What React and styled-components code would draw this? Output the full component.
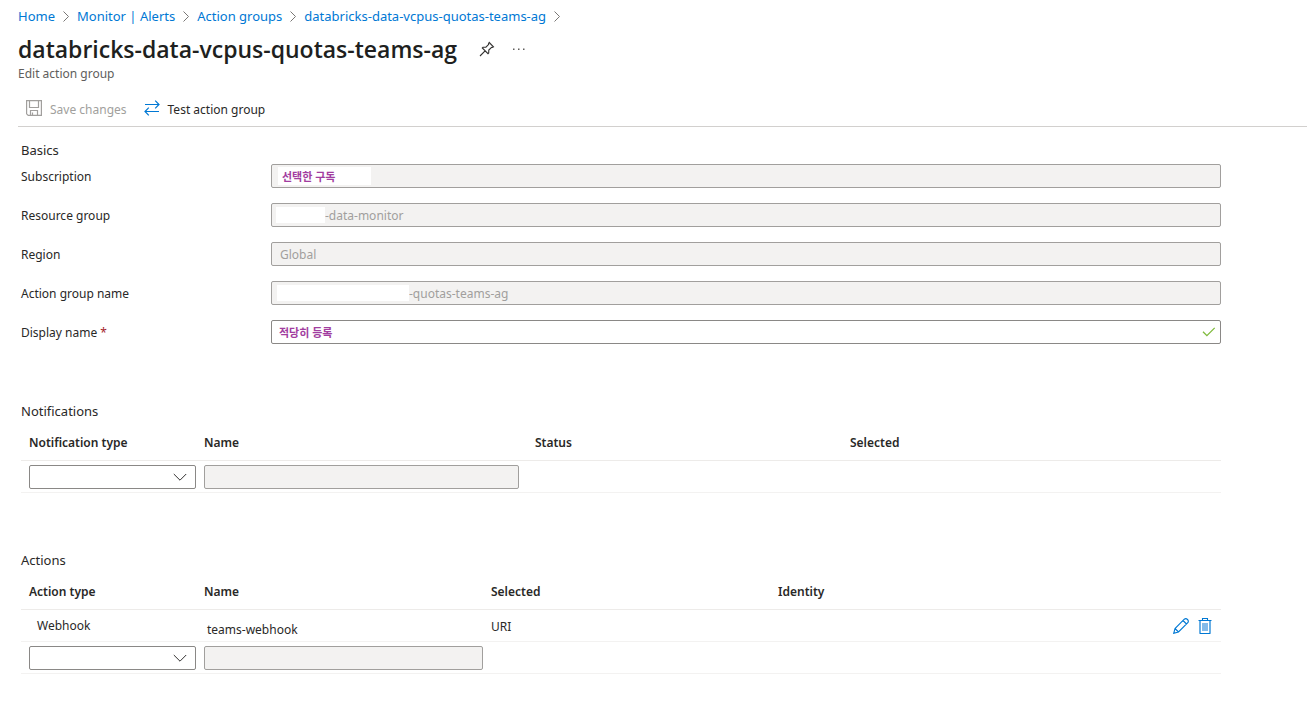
import React from "react";
import styled, { createGlobalStyle } from "styled-components";

const GlobalStyle = createGlobalStyle`
  * { box-sizing: border-box; }
  body {
    margin: 0;
    background: #fff;
    color: #292827;
    font-family: "Noto Sans", "Noto Sans CJK KR", sans-serif;
    font-size: 12px;
    line-height: 20px;
  }
  button, input, select { font: inherit; color: inherit; }
`;

const Page = styled.div`
  padding: 6px 0 32px 18px;
`;

const Breadcrumbs = styled.nav`
  display: flex;
  align-items: center;
  gap: 7px;
  font-size: 13px;
  svg { flex: none; }
`;

const Crumb = styled.a`
  color: #0078d4;
  text-decoration: none;
  white-space: nowrap;
`;

const TitleRow = styled.div`
  display: flex;
  align-items: center;
  gap: 22px;
  margin-top: 8px;
`;

const Title = styled.h1`
  margin: 0;
  font-family: "Open Sans", sans-serif;
  font-size: 23px;
  font-weight: 600;
  line-height: 30px;
  color: #201f1e;
`;

const TitleActions = styled.div`
  display: flex;
  gap: 16px;
`;

const IconButton = styled.button`
  display: inline-flex;
  padding: 0;
  border: 0;
  background: none;
  color: ${(p) => p.$color || "#323130"};
`;

const Subtitle = styled.p`
  margin: 0;
  font-size: 12px;
  line-height: 20px;
  color: #605e5c;
`;

const Toolbar = styled.div`
  display: flex;
  align-items: center;
  gap: 17px;
  height: 35px;
  margin-top: 8px;
  padding: 2px 0 0 8px;
  border-bottom: 1px solid #d2d0ce;
`;

const ToolButton = styled.button`
  display: flex;
  align-items: flex-start;
  gap: 8px;
  padding: 0;
  border: 0;
  background: none;
  white-space: nowrap;
  &:disabled { color: #a19f9d; }
`;

const Content = styled.main`
  padding: 13px 86px 0 3px;
`;

const Section = styled.section`
  & + & { margin-top: 57px; }
`;

const SectionTitle = styled.h2`
  margin: 0;
  font-size: 13px;
  font-weight: 400;
  line-height: 20px;
`;

const Fields = styled.div`
  display: grid;
  gap: 15px;
  margin-top: 4px;
`;

const FieldRow = styled.div`
  display: grid;
  grid-template-columns: 250px 1fr;
  align-items: center;
`;

const Label = styled.label`
  padding-top: 2px;
`;

const Required = styled.span`
  color: #a4262c;
`;

const InputFrame = styled.div`
  display: flex;
  align-items: center;
  height: 24px;
  padding: 0 4px 0 ${(p) => p.$inset}px;
  border: 1px solid ${(p) => (p.$disabled ? "#a19f9d" : "#8a8886")};
  border-radius: 2px;
  background: ${(p) => (p.$disabled ? "#f3f2f1" : "#fff")};
`;

const Mask = styled.span`
  flex: none;
  width: ${(p) => p.$width}px;
  height: 16px;
  background: #fff;
`;

const TextInput = styled.input`
  flex: ${(p) => (p.$width ? "none" : "1")};
  width: ${(p) => (p.$width ? p.$width + "px" : "auto")};
  min-width: 0;
  height: 18px;
  padding: 2px 0 0 ${(p) => p.$pad || 0}px;
  border: 0;
  outline: 0;
  background: ${(p) => (p.$width ? "#fff" : "transparent")};
  color: ${(p) => (p.$note ? "#a23da0" : "#a19f9d")};
  font-size: ${(p) => (p.$note ? 11 : 12)}px;
  font-weight: ${(p) => (p.$note ? 700 : 400)};
`;

const Table = styled.table`
  width: 100%;
  margin-top: 3px;
  border-collapse: separate;
  border-spacing: 0;
  table-layout: fixed;
`;

const Th = styled.th`
  width: ${(p) => (p.$width ? p.$width + "px" : "auto")};
  height: 37px;
  padding: 2px 0 0 8px;
  border-bottom: 1px solid #edebe9;
  font-weight: 600;
  text-align: left;
`;

const Td = styled.td`
  height: 32px;
  padding: 0 0 0 8px;
  border-bottom: 1px solid #f3f2f1;
  vertical-align: middle;
`;

const TypeText = styled.span`
  padding-left: 8px;
`;

const NameText = styled.div`
  padding: 8px 0 0 3px;
`;

const ValueText = styled.div`
  padding-top: 2px;
`;

const RowActions = styled.div`
  display: flex;
  justify-content: flex-end;
  gap: 8px;
  padding-right: 8px;
`;

const SelectFrame = styled.div`
  display: grid;
  align-items: center;
  height: 24px;
  border: 1px solid #8a8886;
  border-radius: 2px;
  svg {
    grid-area: 1 / 1;
    justify-self: end;
    margin-right: 8px;
    pointer-events: none;
  }
`;

const Select = styled.select`
  grid-area: 1 / 1;
  width: 100%;
  height: 22px;
  border: 0;
  background: transparent;
  appearance: none;
`;

const NameInput = styled.input`
  display: block;
  width: calc(100% - ${(p) => p.$trim || 0}px);
  height: 24px;
  padding: 0 8px;
  border: 1px solid #a19f9d;
  border-radius: 2px;
  background: #f3f2f1;
`;

const Chevron = () => (
  <svg width="8" height="12" viewBox="0 0 8 12" fill="none" stroke="#797775" aria-hidden="true">
    <path d="M1.500 1.500 6.500 6.500l-5 5" />
  </svg>
);

const DownIcon = () => (
  <svg width="14" height="8" viewBox="0 0 14 8" fill="none" stroke="#323130" aria-hidden="true">
    <path d="M.8 1 7 7.200 13.200 1" />
  </svg>
);

const PinIcon = () => (
  <svg width="16" height="16" viewBox="0 0 16 16" fill="none" stroke="currentColor" strokeWidth="1.100" aria-hidden="true">
    <path d="M10.200 1.500 14.500 5.800 13.300 6.500 12.600 6.300 9.800 9.100 9.700 12 9 12.700 3.300 7 4 6.300 6.900 6.200 9.700 3.400 9.500 2.700zM6.100 9.900 1 15" />
  </svg>
);

const MoreIcon = () => (
  <svg width="16" height="16" viewBox="0 0 16 16" fill="#605e5c" aria-hidden="true">
    <path d="M2 7.500h1.500v1.500H2zM7 7.500h1.500v1.500H7zM12 7.500h1.500v1.500H12z" />
  </svg>
);

const SaveIcon = () => (
  <svg width="16" height="16" viewBox="0 0 16 16" fill="none" stroke="currentColor" strokeWidth="1.200" aria-hidden="true">
    <path d="M.6.6h14.800v14.800H2.200L.6 13.800zM3.500.6v6.900h9V.6M4.500 15.400v-4.900h7v4.900M6.500 12.500v3" />
  </svg>
);

const SwapIcon = () => (
  <svg width="16" height="16" viewBox="0 0 16 16" fill="none" stroke="#0078d4" strokeWidth="1.200" aria-hidden="true">
    <path d="M1 4.500h14M11.200.700 15 4.500l-3.800 3.800M15 11.500H1M4.800 7.700 1 11.500l3.800 3.800" />
  </svg>
);

const CheckIcon = () => (
  <svg width="14" height="12" viewBox="0 0 14 12" fill="none" stroke="#7fba3c" strokeWidth="1.300" aria-hidden="true">
    <path d="M1 5.800 4.900 9.700 12.700 1.900" />
  </svg>
);

const PencilIcon = () => (
  <svg width="16" height="16" viewBox="0 0 16 16" fill="none" stroke="currentColor" strokeWidth="1.100" aria-hidden="true">
    <path d="M.7 15.300 2 10.500 11.300 1.200Q13 0 14.500 1.500 16 3 14.800 4.700L5.500 14zM2 10.500 5.500 14M10 2.500 13.500 6" />
  </svg>
);

const TrashIcon = () => (
  <svg width="16" height="16" viewBox="0 0 16 16" fill="none" aria-hidden="true">
    <path d="M3 3v12M13 3v12" stroke="#5aa7e2" strokeWidth="1.800" />
    <path d="M1.500 2.500h13M5.500 2.500v-2h5v2M2.500 15.500h11" stroke="currentColor" strokeWidth="1.100" />
    <path d="M5 5h6v8H5z" fill="#83bbea" />
  </svg>
);

const crumbs = ["Home", "Monitor | Alerts", "Action groups", "databricks-data-vcpus-quotas-teams-ag"];

const fields = [
  { id: "subscription", label: "Subscription", value: "선택한 구독", note: true, disabled: true, inset: 6, pad: 4, width: 93 },
  { id: "resource-group", label: "Resource group", value: "-data-monitor", disabled: true, inset: 4, mask: 49 },
  { id: "region", label: "Region", value: "Global", disabled: true, inset: 8 },
  { id: "group-name", label: "Action group name", value: "-quotas-teams-ag", disabled: true, inset: 5, mask: 132 },
  { id: "display-name", label: "Display name", value: "적당히 등록", note: true, required: true, inset: 7 },
];

function Field({ field }) {
  return (
    <FieldRow>
      <Label htmlFor={field.id}>
        {field.label}
        {field.required && <Required> *</Required>}
      </Label>
      <InputFrame $disabled={field.disabled} $inset={field.inset}>
        {field.mask && <Mask $width={field.mask} />}
        <TextInput
          id={field.id}
          defaultValue={field.value}
          disabled={field.disabled}
          $note={field.note}
          $pad={field.pad}
          $width={field.width}
        />
        {field.required && <CheckIcon />}
      </InputFrame>
    </FieldRow>
  );
}

function TypeSelect({ label }) {
  return (
    <SelectFrame>
      <Select aria-label={label} defaultValue="">
        <option value="" />
      </Select>
      <DownIcon />
    </SelectFrame>
  );
}

export default function App() {
  return (
    <Page>
      <GlobalStyle />
      <Breadcrumbs aria-label="Breadcrumb">
        {crumbs.map((name) => (
          <React.Fragment key={name}>
            <Crumb href="#">{name}</Crumb>
            <Chevron />
          </React.Fragment>
        ))}
      </Breadcrumbs>
      <TitleRow>
        <Title>databricks-data-vcpus-quotas-teams-ag</Title>
        <TitleActions>
          <IconButton aria-label="Pin"><PinIcon /></IconButton>
          <IconButton aria-label="More"><MoreIcon /></IconButton>
        </TitleActions>
      </TitleRow>
      <Subtitle>Edit action group</Subtitle>
      <Toolbar>
        <ToolButton disabled><SaveIcon />Save changes</ToolButton>
        <ToolButton><SwapIcon />Test action group</ToolButton>
      </Toolbar>
      <Content>
        <Section>
          <SectionTitle>Basics</SectionTitle>
          <Fields>
            {fields.map((field) => <Field key={field.id} field={field} />)}
          </Fields>
        </Section>
        <Section>
          <SectionTitle>Notifications</SectionTitle>
          <Table>
            <thead>
              <tr>
                <Th $width={175}>Notification type</Th>
                <Th $width={331}>Name</Th>
                <Th $width={315}>Status</Th>
                <Th>Selected</Th>
              </tr>
            </thead>
            <tbody>
              <tr>
                <Td><TypeSelect label="Notification type" /></Td>
                <Td><NameInput aria-label="Notification name" disabled $trim={8} /></Td>
                <Td />
                <Td />
              </tr>
            </tbody>
          </Table>
        </Section>
        <Section>
          <SectionTitle>Actions</SectionTitle>
          <Table>
            <thead>
              <tr>
                <Th $width={175}>Action type</Th>
                <Th $width={287}>Name</Th>
                <Th $width={287}>Selected</Th>
                <Th>Identity</Th>
              </tr>
            </thead>
            <tbody>
              <tr>
                <Td><TypeText>Webhook</TypeText></Td>
                <Td><NameText>teams-webhook</NameText></Td>
                <Td><ValueText>URI</ValueText></Td>
                <Td>
                  <RowActions>
                    <IconButton aria-label="Edit" $color="#0078d4"><PencilIcon /></IconButton>
                    <IconButton aria-label="Delete" $color="#0078d4"><TrashIcon /></IconButton>
                  </RowActions>
                </Td>
              </tr>
              <tr>
                <Td><TypeSelect label="Action type" /></Td>
                <Td><NameInput aria-label="Action name" disabled /></Td>
                <Td />
                <Td />
              </tr>
            </tbody>
          </Table>
        </Section>
      </Content>
    </Page>
  );
}
